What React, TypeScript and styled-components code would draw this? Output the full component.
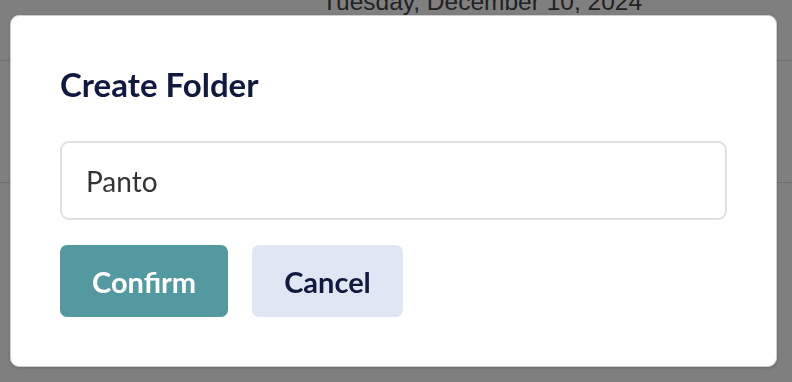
import styled, { createGlobalStyle } from 'styled-components';

const GlobalStyle = createGlobalStyle`
  html, body {
    margin: 0;
    padding: 0;
    background: #ffffff;
    font-family: Lato, "Noto Sans", sans-serif;
  }
`;

export default function App() {
  return (
    <>
      <GlobalStyle />
      <Page>
        <Header>
          <DateLabel>Tuesday, December 10, 2024</DateLabel>
        </Header>
        <Row />
      </Page>
      <Overlay>
        <Modal>
          <Title>Create Folder</Title>
          <NameInput defaultValue="Panto" />
          <Actions>
            <Button $variant="primary">Confirm</Button>
            <Button $variant="secondary">Cancel</Button>
          </Actions>
        </Modal>
      </Overlay>
    </>
  );
}

const Page = styled.div`
  display: flex;
  flex-direction: column;
  min-height: 100vh;
`;

const Header = styled.div`
  height: 60px;
  padding-left: 322px;
  border-bottom: 1px solid #dddddd;
  overflow: hidden;
`;

const DateLabel = styled.div`
  margin-top: -12px;
  font-family: 'Liberation Sans', Arial, sans-serif;
  font-size: 24.5px;
  line-height: 28px;
  color: #444444;
  white-space: nowrap;
`;

const Row = styled.div`
  height: 121px;
  border-bottom: 1px solid #dddddd;
`;

const Overlay = styled.div`
  position: fixed;
  inset: 0;
  display: flex;
  align-items: flex-start;
  padding: 15px 15px 0 10px;
  background: rgba(0, 0, 0, 0.5);
`;

const Modal = styled.div`
  flex: 1;
  display: flex;
  flex-direction: column;
  padding: 48px 49px 49px 49px;
  background: #ffffff;
  border: 1px solid #cfcfcf;
  border-radius: 9px;
  box-shadow: 0 1px 3px rgba(0, 0, 0, 0.2);
`;

const Title = styled.h2`
  margin: 0 0 37px;
  font-size: 33px;
  line-height: 40px;
  font-weight: 700;
  color: #111a3e;
`;

const NameInput = styled.input`
  box-sizing: border-box;
  height: 79px;
  padding: 0 24px;
  border: 2px solid #e0e0e0;
  border-radius: 9px;
  font-family: Lato, sans-serif;
  font-size: 28px;
  color: #333333;
  outline: none;
`;

const Actions = styled.div`
  display: flex;
  gap: 24px;
  margin-top: 25px;
`;

const Button = styled.button<{ $variant: 'primary' | 'secondary' }>`
  height: 72px;
  padding: 0 32px;
  border: none;
  border-radius: 7px;
  font-family: Lato, sans-serif;
  font-size: 29px;
  font-weight: 700;
  background: ${(p) => (p.$variant === 'primary' ? '#5599a0' : '#e1e6f4')};
  color: ${(p) => (p.$variant === 'primary' ? '#ffffff' : '#111a3e')};
  cursor: pointer;
`;
